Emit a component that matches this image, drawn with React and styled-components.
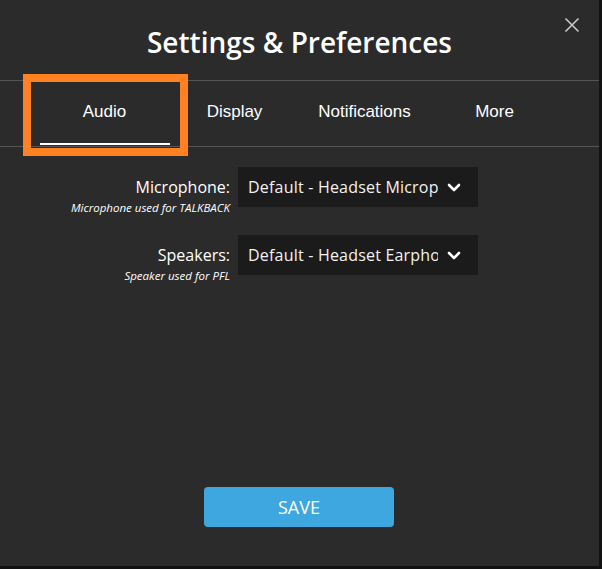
import styled, { createGlobalStyle } from 'styled-components'

const GlobalStyle = createGlobalStyle`
    html, body {
        margin: 0;
        padding: 0;
        background-color: #121212;
    }
    * {
        box-sizing: border-box;
    }
`

const Dialog = styled.div`
    width: 599px;
    height: 566px;
    background-color: #2b2b2b;
    display: flex;
    flex-direction: column;
    position: relative;
    color: white;
`

const Header = styled.header`
    height: 81px;
    display: flex;
    align-items: center;
    justify-content: center;
    padding-top: 3px;
    border-bottom: 1px solid #555;
`

const Title = styled.h1`
    margin: 0;
    font-family: "Open Sans", "Noto Sans", sans-serif;
    font-weight: 600;
    font-size: 28px;
    color: #fff;
`

const CloseButton = styled.button`
    position: absolute;
    top: 16px;
    right: 18px;
    width: 18px;
    height: 18px;
    padding: 0;
    border: none;
    background: transparent;
    cursor: pointer;
    display: flex;
`

const TabBar = styled.nav`
    height: 66px;
    display: flex;
    justify-content: center;
    border-bottom: 1px solid #555;
`

const Tab = styled.div`
    position: relative;
    width: 130px;
    display: flex;
    align-items: center;
    justify-content: center;
    padding-bottom: 3px;
    font-family: "Liberation Sans", Arial, sans-serif;
    font-size: 17px;
    color: #fff;
    cursor: pointer;

    &::after {
        content: '';
        position: absolute;
        left: 0;
        right: 0;
        bottom: 1px;
        height: 2px;
        background-color: ${props => props.active ? '#fff' : 'transparent'};
    }
`

const Highlight = styled.div`
    position: absolute;
    top: -7px;
    left: -17px;
    right: -18px;
    bottom: -10px;
    border: 8px solid #ff8122;
    pointer-events: none;
`

const Form = styled.div`
    display: flex;
    flex-direction: column;
    gap: 28px;
    padding-top: 20px;
`

const Row = styled.div`
    display: grid;
    grid-template-columns: 230px 240px;
    grid-template-rows: 40px;
    column-gap: 8px;
`

const LabelBlock = styled.div`
    display: flex;
    flex-direction: column;
    align-items: flex-end;
    padding-top: 10px;
`

const Label = styled.label`
    font-family: "Open Sans", "Noto Sans", sans-serif;
    font-size: 16px;
    line-height: 20px;
    color: #fff;
`

const Hint = styled.span`
    font-family: "Open Sans", "Noto Sans", sans-serif;
    font-style: italic;
    font-size: 11.5px;
    line-height: 13px;
    margin-top: 4px;
    color: #fff;
`

const Select = styled.div`
    height: 40px;
    background-color: #1b1b1b;
    display: flex;
    align-items: center;
    padding: 0 17px 0 10px;
    gap: 9px;
    cursor: pointer;
`

const SelectValue = styled.span`
    flex: 1;
    overflow: hidden;
    white-space: nowrap;
    font-family: "Open Sans", "Noto Sans", sans-serif;
    font-size: 16px;
    letter-spacing: 0.2px;
    color: #f2f2f2;
`

const Footer = styled.div`
    margin-top: auto;
    margin-bottom: 39px;
    display: flex;
    justify-content: center;
`

const SaveButton = styled.button`
    width: 190px;
    height: 40px;
    margin-right: 1px;
    border: none;
    border-radius: 4px;
    background-color: #3fa7e0;
    color: #fff;
    font-family: "Open Sans", "Noto Sans", sans-serif;
    font-size: 18px;
    cursor: pointer;
`

const Chevron = () => (
    <svg width="14" height="9" viewBox="0 0 14 9">
        <path d="M2 2 L7 7 L12 2" fill="none" stroke="#fff" strokeWidth="2.6" strokeLinecap="round" strokeLinejoin="round" />
    </svg>
)

const tabs = ['Audio', 'Display', 'Notifications', 'More']

const devices = [
    { label: 'Microphone:', hint: 'Microphone used for TALKBACK', value: 'Default - Headset Microphone' },
    { label: 'Speakers:', hint: 'Speaker used for PFL', value: 'Default - Headset Earphone' },
]

const App = () => {
    return (
        <>
            <GlobalStyle />
            <Dialog>
                <Header>
                    <Title>Settings &amp; Preferences</Title>
                    <CloseButton aria-label="Close">
                        <svg width="18" height="18" viewBox="0 0 18 18">
                            <path d="M2.5 2.5 L15.5 15.5 M15.5 2.5 L2.5 15.5" stroke="#c8c8c8" strokeWidth="1.6" />
                        </svg>
                    </CloseButton>
                </Header>
                <TabBar>
                    {tabs.map((t, i) => (
                        <Tab key={t} active={i === 0}>
                            {t}
                            {i === 0 && <Highlight />}
                        </Tab>
                    ))}
                </TabBar>
                <Form>
                    {devices.map(d => (
                        <Row key={d.label}>
                            <LabelBlock>
                                <Label>{d.label}</Label>
                                <Hint>{d.hint}</Hint>
                            </LabelBlock>
                            <Select>
                                <SelectValue>{d.value}</SelectValue>
                                <Chevron />
                            </Select>
                        </Row>
                    ))}
                </Form>
                <Footer>
                    <SaveButton>SAVE</SaveButton>
                </Footer>
            </Dialog>
        </>
    )
}

export default App
